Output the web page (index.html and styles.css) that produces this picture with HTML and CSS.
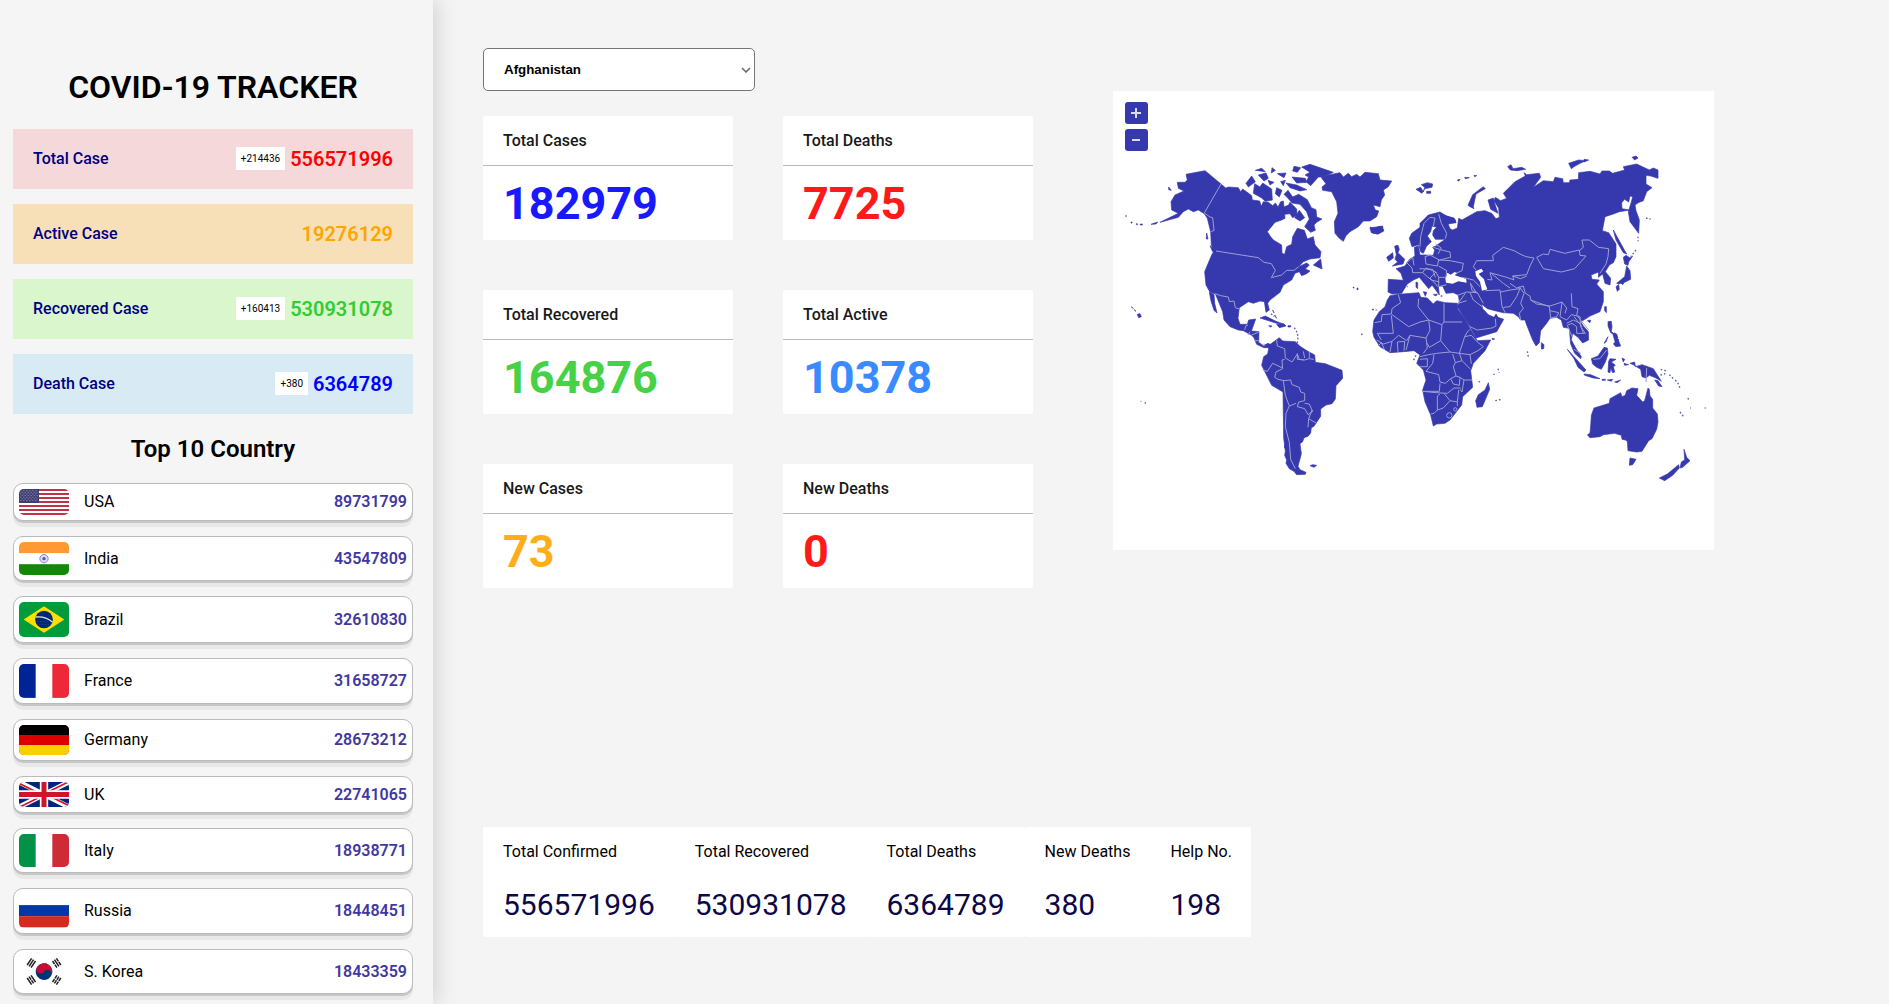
FILE: index.html
```html
<!DOCTYPE html>
<html lang="en">
<head>
<meta charset="utf-8">
<title>COVID-19 Tracker</title>
<link rel="stylesheet" href="styles.css">
</head>
<body>
<div class="app">
  <aside class="sidebar">
    <h1 class="title">COVID-19 TRACKER</h1>
    <div class="summary">
      <div class="case case-total"><span>Total Case</span><div class="case-value"><small>+214436</small><b>556571996</b></div></div>
      <div class="case case-active"><span>Active Case</span><div class="case-value"><b>19276129</b></div></div>
      <div class="case case-recovered"><span>Recovered Case</span><div class="case-value"><small>+160413</small><b>530931078</b></div></div>
      <div class="case case-death"><span>Death Case</span><div class="case-value"><small>+380</small><b>6364789</b></div></div>
    </div>
    <h2 class="subtitle">Top 10 Country</h2>
    <ul class="countries">
      <li>
        <svg class="flag flag-us" viewBox="0 0 150 79" preserveAspectRatio="none"><rect width="150" height="79" fill="#fff"/><path stroke="#bf3349" stroke-width="6.1" d="M0 3H150M0 15.200H150M0 27.300H150M0 39.500H150M0 51.600H150M0 63.800H150M0 76H150"/><rect width="60" height="42.500" fill="#3f3e72"/><path stroke="#a9a8c4" stroke-width="2.500" stroke-dasharray="3 6" d="M4 5H58M8 10H58M4 15H58M8 20H58M4 25H58M8 30H58M4 35H58"/></svg>
        <span>USA</span><b>89731799</b></li>
      <li>
        <svg class="flag" viewBox="0 0 150 100"><rect width="150" height="100" fill="#fff"/><rect width="150" height="33.300" fill="#f93"/><rect y="66.600" width="150" height="33.400" fill="#128807"/><circle cx="75" cy="50" r="12.500" fill="#dcdcf2" stroke="#8888c8" stroke-width="3"/><circle cx="75" cy="50" r="5" fill="#5757b2"/></svg>
        <span>India</span><b>43547809</b></li>
      <li>
        <svg class="flag flag-br" viewBox="0 0 150 105"><rect width="150" height="105" fill="#009c3b"/><path fill="#ffdf00" d="M14 52.500 75 13l61 39.500L75 92z"/><circle cx="75" cy="52.500" r="26.500" fill="#002776"/><path fill="none" stroke="#d5e6dd" stroke-width="4" d="M50 45q29-3 50 15"/><path stroke="#8094b8" stroke-width="2" stroke-dasharray="2 7" d="M56 59h34M62 67h28"/></svg>
        <span>Brazil</span><b>32610830</b></li>
      <li>
        <svg class="flag flag-fr" viewBox="0 0 150 100" preserveAspectRatio="none"><rect width="150" height="100" fill="#fff"/><rect width="50" height="100" fill="#002395"/><rect x="100" width="50" height="100" fill="#ed2939"/></svg>
        <span>France</span><b>31658727</b></li>
      <li>
        <svg class="flag flag-de" viewBox="0 0 150 90"><rect width="150" height="90" fill="#d00"/><rect width="150" height="30" fill="#000"/><rect y="60" width="150" height="30" fill="#ffce00"/></svg>
        <span>Germany</span><b>28673212</b></li>
      <li>
        <svg class="flag flag-uk" viewBox="0 0 60 30"><rect width="60" height="30" fill="#00247d"/><path stroke="#fff" stroke-width="6" d="M0 0 60 30M60 0 0 30"/><path stroke="#cf142b" stroke-width="2" d="M0 1.500 27 15M0 30.500 30 15.500M60 28.500 33 15M60-.5 30 14.500"/><path stroke="#fff" stroke-width="10" d="M30 0V30M0 15H60"/><path stroke="#cf142b" stroke-width="6" d="M30 0V30M0 15H60"/></svg>
        <span>UK</span><b>22741065</b></li>
      <li>
        <svg class="flag" viewBox="0 0 150 100"><rect width="150" height="100" fill="#fff"/><rect width="50" height="100" fill="#009246"/><rect x="100" width="50" height="100" fill="#ce2b37"/></svg>
        <span>Italy</span><b>18938771</b></li>
      <li>
        <svg class="flag" viewBox="0 0 150 100"><rect width="150" height="100" fill="#fff"/><rect y="33.300" width="150" height="33.400" fill="#0039a6"/><rect y="66.600" width="150" height="33.400" fill="#d52b1e"/></svg>
        <span>Russia</span><b>18448451</b></li>
      <li>
        <svg class="flag" viewBox="0 0 150 100"><rect width="150" height="100" fill="#fff"/><g transform="rotate(33.700 75 50)"><circle cx="75" cy="50" r="25" fill="#003478"/><path fill="#c60c30" d="M50 50a25 25 0 0 1 50 0 12.500 12.500 0 0 0-25 0 12.500 12.500 0 0 1-25 0z"/></g><g stroke="#222" stroke-width="4.500"><path transform="translate(37 24) rotate(33.700)" d="M-7-12V12M0-12V12M7-12V12"/><path transform="translate(113 24) rotate(-33.700)" d="M-7-12V-1M-7 1V12M0-12V12M7-12V-1M7 1V12"/><path transform="translate(37 75) rotate(-33.700)" d="M-7-12V12M0-12V-1M0 1V12M7-12V12"/><path transform="translate(113 75) rotate(33.700)" d="M-7-12V-1M-7 1V12M0-12V-1M0 1V12M7-12V-1M7 1V12"/></g></svg>
        <span>S. Korea</span><b>18433359</b></li>
    </ul>
  </aside>

  <main class="content">
    <section class="stats">
      <div class="picker">
        <select><option>Afghanistan</option></select>
        <svg viewBox="0 0 10 6"><path d="m1 1 4 4 4-4"/></svg>
      </div>
      <div class="cards">
        <article class="card"><h3>Total Cases</h3><p class="c-blue">182979</p></article>
        <article class="card"><h3>Total Deaths</h3><p class="c-red">7725</p></article>
        <article class="card"><h3>Total Recovered</h3><p class="c-green">164876</p></article>
        <article class="card"><h3>Total Active</h3><p class="c-sky">10378</p></article>
        <article class="card"><h3>New Cases</h3><p class="c-orange">73</p></article>
        <article class="card"><h3>New Deaths</h3><p class="c-red">0</p></article>
      </div>
      <div class="totals">
        <div><span>Total Confirmed</span><strong>556571996</strong></div>
        <div><span>Total Recovered</span><strong>530931078</strong></div>
        <div><span>Total Deaths</span><strong>6364789</strong></div>
        <div><span>New Deaths</span><strong>380</strong></div>
        <div><span>Help No.</span><strong>198</strong></div>
      </div>
    </section>

    <section class="map">
      <svg class="world" viewBox="0 0 1803 1377">
        <!-- North America and Greenland -->
        <g transform="translate(-9 -18)">
          <path class="land" d="M228 268 285 257 333 297 347 309 356 306 385 308 392 320 398 312 412 322 425 332 427 345 449 348 454 364 460 350 475 352 488 362 496 354 504 366 512 350 520 348 522 366 536 360 540 352 560 372 561 390 548 398 540 386 524 388 525 400 515 405 495 412 472 440 482 455 490 465 515 480 516 505 524 508 530 485 545 478 548 455 562 430 583 436 592 462 610 455 615 480 633 500 630 518 600 522 580 530 566 545 590 534 598 540 586 552 600 558 590 566 575 572 568 560 555 565 545 585 520 600 510 622 480 645 473 655 478 675 468 682 463 650 450 648 430 655 415 650 388 668 384 700 390 718 412 718 416 705 437 702 430 722 424 738 447 740 446 772 460 782 474 775 484 780 478 788 462 788 440 778 432 758 425 751 400 737 385 735 360 725 342 705 338 680 316 626 300 622 288 600 284 560 305 510 312 498 304 480 302 440 292 400 283 386 265 375 250 380 235 372 220 380 205 397 150 412 205 385 185 375 183 350 195 330 222 318 205 310 202 292 225 292 232 285z"/>
          <path class="land" d="M298 622 312 628 314 655 321 684 312 676 303 648zM655 270 690 263 700 276 715 265 725 275 740 268 750 276 765 262 805 266 810 285 845 288 835 305 820 315 824 330 814 345 810 365 790 360 796 375 806 378 800 395 780 408 760 408 745 425 720 440 708 452 700 469 688 460 675 445 673 410 684 385 680 350 665 320 638 316 636 306 648 296 634 278z"/>
          <path class="land" d="M434 296 450 306 458 294 485 312 487 345 466 349 454 338 430 325zM408 295 425 273 436 290 415 306zM575 246 600 238 670 262 640 276 625 276 602 302 588 290 596 276 585 270 600 262zM534 316 548 336 566 328 592 344 604 368 618 374 620 396 636 402 620 412 612 420 616 436 602 442 584 425 598 402 590 380 570 358 546 354 534 340 522 328zM436 256 455 250 466 260zM445 270 468 264 475 280 462 288zM486 248 496 256 484 264zM474 286 492 292 480 300zM502 266 528 264 522 278zM512 290 526 286 520 302zM552 244 572 248 562 262 548 258zM546 276 586 280 590 292 560 294zM528 294 560 300 590 314 570 318 540 308zM500 308 516 316 508 336 496 326zM568 376 584 398 570 408 554 398zM610 540 632 522 636 552zM568 548 584 540 582 566zM176 306 184 316 176 314zM780 426 792 430 812 424 822 436 805 447 788 444zM300 482 312 492 318 502 308 500zM290 444 294 462 289 462z"/>
          <path class="land" d="m450 699 16-6 30 15 26 10-22-3zM500 718l22-1 6 6-20 5zM476 722l10 1-4 3zM534 722h8v4h-8zM488 675l4 9zM494 690l6 10zM82 688l8-2 4 9-8 3zM64 666l6 4zM72 674l6 5zM123 418l20-7-5 6zM91 417h6v3h-6zM63 411h3v3h-3zM79 416h3v3h-3zM47 392h2v2h-2zM729 607h3v2h-3zM741 609h3v5h-3zM787 673h3v2h-3z"/>
          <path class="dots" d="M553 728l9 15 2 15-2 18M483 686l10 9M92 949h2M104 954h4M754 746l7 9"/>
          <path class="line" d="M333 297 283 384 300 396 308 398 312 436 304 440M318 498 445 518 462 532 484 536 496 556 484 578 515 570 530 556 552 556 566 545M316 626 332 632 355 636 358 650 372 648 376 668 388 672M404 734 408 722 414 720M420 740 414 750M424 750 446 742M432 765 446 768M462 776v8"/>
        </g>
        <!-- South America -->
        <g transform="translate(-9 597)">
          <path class="land" d="m478 165 30-22 10 10 38 2 14 14 22 14 22 12 2 22 30 4 50 20 2 24-20 22-2 40-10 14-18 4-16 12v22l-20 30-8 4-2 16-8 10-12 4-4 12-8 6 4 30-4 16-6 22 6 10 18 8-2 6-26 1-8-10-14-8-10-16 2-10-6-14 2-12-5-40-2-138-34-20-30-60 6-26 12-8z"/>
          <path class="land" d="m600 527 8-3 12 2-8 6zM524 466h5v8h-5z"/>
          <path class="line" d="m500 150 2 18 22 8 2 28 20 12 16-24 6 16 16 2 14-4 14 2M524 208l-8 2 2 26-20 10-4 16 10 6 18 4 20-2 4 14 22 8 4 14 12 4v22l-18 4-4 14 22 6 10 18 14-10-10-22-14-2M458 240l14 4 16-24 30 14M520 272l6 44 12 32-10 22-2 40 12 48 4 50 14 28M538 348l20-8M606 360l-10 26-2 26M596 386l24 14M584 204l-4-20M598 204V186M562 190v18l20 2"/>
        </g>
        <!-- Europe and Asia -->
        <g transform="translate(771 147)">
          <path class="land" d="M55 418 100 421 93 400 78 386 105 378 118 358 135 348 133 322 145 318 150 345 165 345 190 346 194 330 188 322 198 318 205 312 226 298 196 298 188 285 190 272 200 262 186 258 182 275 172 288 184 305 170 318 160 340 152 336 146 314 126 320 118 295 125 280 150 262 150 250 175 225 210 216 230 228 255 238 258 248 232 246 240 266 248 270 262 264 266 235 276 240 320 215 345 212 365 220 378 236 388 232 386 205 372 182 376 172 392 182 410 175 400 160 435 125 466 108 462 98 470 104 508 100 512 112 490 142 520 122 550 125 555 112 578 116 580 128 598 128 600 120 625 118 626 98 660 94 690 102 696 93 718 93 728 100 764 90 760 80 800 72 838 90 850 84 864 90 864 115 842 108 828 106 828 132 846 143 830 155 820 182 805 188 795 195 798 212 808 240 806 280 780 245 775 215 784 186 788 170 780 168 776 186 764 178 755 188 756 206 780 210 748 215 730 222 705 230 697 272 716 278 738 312 738 350 730 368 718 375 706 395 722 415 720 435 705 430 698 402 685 412 686 396 663 405 666 418 688 420 680 432 700 455 700 485 690 515 660 528 645 538 632 545 640 558 655 575 656 600 638 609 624 592 608 580 604 600 616 622 634 650 632 656 614 640 602 612 598 565 580 562 574 540 560 532 540 535 530 550 512 572 508 608 498 618 488 600 470 555 465 540 452 540 445 530 430 520 400 518 375 512 352 506 335 492 338 506 355 524 372 532 378 522 384 532 401 538 380 575 318 594 300 560 262 500 268 485 265 465 250 458 228 460 218 438 205 438 208 465 190 440 160 408 156 405 186 436 176 446 148 412 130 420 112 432 95 460 66 462 54 456z"/>
          <path class="sea" d="M232 398 242 404 254 396 262 400 254 406 288 416 290 428 265 424 248 431 228 428 226 414zM316 394 334 386 340 394 326 402 342 418 346 432 352 448 336 452 330 425 318 408z"/>
          <path class="land" d="m74 318 10-2 4 12-4 10 20 20-5 14-32 6 16-12-8-8 4-14zM50 352l18-14 2 16-14 10zM0 264l38-6 2 16-18 8-18-4zM300 200l-6-4 14-32 32-24 6 6-28 16-8 38 2 6zM354 180l16-6 4 16 10 30-22-12zM138 148l14-6 8 14 4-14-10-8 18-6 16 4-2 10-22 4-8 14zM170 154h12v6h-12zM222 226l30 8 6 14-24 4-14-10zM413 80l10-6 6 12 26-4 12 6-26 4-20-2zM596 70l30-10 22 2-18 8-18 10-8 6zM642 58l14 2-14 6zM786 52l12-4 6 6-10 6zM262 120l8-2-4 6zM284 112l14 1-12 3zM312 106l8 1-6 3zM730 270l32 58 8 14-10-4-22-38zM760 352l8-6 12 8 8-6-12 18-2 10-10-4zM770 378l10 14 2 26-16 8-20 6-6-2 24-20zM738 440l8-6 2 14-6 6zM754 430l8-2-4 6zM704 500h5v18l-5-6zM652 542l10-2-2 8zM714 545l10-1 2 16-2 14 12 12-14-8-8-20zM160 455l10 2-4 12zM138 426l5 2v18l-5-4zM190 464l12-2-4 6zM366 595l8 2-6 2z"/>
          <path class="land" d="m728 580 8 6 10 14-10 8z"/>
          <path class="dots" d="M804 290v14M798 330l-16 20M828 234l14 3M212 468h8M112 440h2"/>
          <path class="line" d="M150 320 152 290 162 250 180 232 195 234 190 258M206 222 214 250 230 280 226 296M190 322 215 330 240 336 242 352 208 360 180 345 165 350 168 372 202 378 206 360 240 362 280 370 276 392 258 400M206 378 230 392 228 412 206 412 198 396 168 384 158 398 128 398 126 384 110 368 128 352M128 352 132 376M196 312l18 12-10 18M206 412v28l24-6M198 396l-18 18 24 26M158 398l26 22 24 6M148 386l40 2 8 24M276 412 310 420 330 440M300 428 320 460M262 466 290 456 322 458 340 490M322 458 306 452 302 432M286 460 264 490 290 482M300 458 310 480 336 500M346 452 390 450 392 464 396 500 406 518M392 456 420 450 450 446 440 470 420 500 400 502M310 380 320 362 370 362 368 346 400 322 432 332 450 342 468 350 492 354 480 378 470 404 428 408 432 420 410 412 360 398 366 420 352 418M310 380 318 390M364 400 400 430 420 444M428 408 452 416 470 408M420 430 440 444 460 438 466 460 480 468 482 480 500 492 540 498 576 486 590 504 585 520M448 440 462 460 452 490 460 505 448 520 452 540M482 480l56 20 4 34 18-4 6-12-26-6M500 352 520 342 535 344 540 328 584 340 628 330 630 346 648 348 614 386 574 396 520 386zM628 332 640 322 636 300 658 300 686 322 716 326 714 350 708 372 690 400M576 486 570 530 590 540 604 524 630 530 632 560 646 580 620 580 620 560 606 550 592 556 606 590M612 530 636 560M300 560 322 570 366 564 378 558 376 536"/>
        </g>
        <!-- Africa and Oceania -->
        <g transform="translate(771 627)">
          <path class="land" d="M60-13 85-17 147-22 152-8 172-6 190 12 200 2 225 8 262 10 264 28 284 55 300 85 322 122 362 120 345 152 310 190 302 212 308 262 278 290 275 315 240 360 225 370 200 372 190 378 182 345 165 305 158 270 168 240 160 210 140 190 150 165 132 152 100 155 60 158 30 140 12 112 8 95 12 60 28 35 45 20 52 0z"/>
          <path class="land" d="m355 248 4 20-22 52-16 2-4-20 8-18 20-14zM514 128l8 6-1 12-7 1zM592 148l20 22 36 40-6 6-18-14-12-26zM642 222l20 2 28 12-20-2-26-8zM664 176l20-8 18-26 10 2 2 18-8 24-12 22-14-6-12-10zM716 184l4-8 18 2-14 8 12 10-6 4 4 16-6 2-6-14-2 14-6-2zM756 174l8 4-4 8zM762 190l14 4-12 2zM780 190l14-4 2 14 20-6 34 12 24 38-16-10-20-8-10 8-12-4-4-22-22-14zM734 246l18-6-10 8zM696 238h10v3h-10zM712 240l16-2-4 6zM702 130l12-20-6 16zM730 132l14-14 8 20-14 2zM732 98l8 4 4 12-8-4z"/>
          <path class="land" d="m854 240 10 2 12 18-10-2zM662 378l2-32 8-22 46-14 2-14 32-18 4 12 10-4 4-14 16-8 18 2-4 20 18 20 6-4 10-38 4 4 2 20 8 10v26l14 18 2 24-4 22-14 28-10 6-20 32-16 2-26-4-2-28-6-4-10-2-2-12-20-6-34 4-10 6-30 3-8-8 8-6zM780 474l18 4-10 16-10 2zM942 448l8 24 10 10-22 20-8 2 4-18 10-6zM926 494l2 10-20 22-24 16-16-8 24-12z"/>
          <path class="dots" d="M872 208l14 4-2 10-14 4M898 224l12 12M916 240l8 10 6 14M954 294l3 10M960 324h2M1004 324h3M930 336l10 13M472 154l4 22M384 206l4 12M370 223h4M326 244l8 6M376 302l18-4M138 166l-8 16M6 28l14 2"/>
          <path class="line" d="M85-15 92 8 66 26 64 42 36 44 34 64 14 68M64 46 70 100 22 100M66 44 116 80 150 66 176 60 144 20 146-4M176 60 216 74 222 66 222 10M222 66H276M176 60 180 90 168 114 120 106 110 122 86 106 66 124 60 156M168 114 172 144 160 160M120 106 108 150M82 126 84 156M82 126 104 124 102 152M66 124 40 132 20 120M22 100 34 120M24 138 34 128 44 150M216 74 212 122 178 142 172 130M212 122 240 156 200 160 176 164 150 170M192 164 188 190 168 214M150 178 172 176 172 200 150 200M240 156 268 160 284 110 292 96 300 88M268 160 300 164 324 152 340 140 322 126 304 106 284 110M300 164 304 192M268 160 276 182 256 188 248 162M276 182 302 208M256 188 250 200 258 228 242 236 250 252 268 256 270 232 258 228M168 214 206 224 210 246 226 250 242 236M158 274 208 274 210 250M158 274 198 278 232 280 252 264 272 264M270 232 282 240 306 240M282 240 276 276 270 268M210 282 202 288 202 330 192 340 182 342M202 330 220 324 240 302 262 306 266 270M240 302 222 280M262 306 262 318M830 204 828 246M670 178 690 176 710 150M604-20 606 20 624 26 620 46 640 70 656 90M590 70 610 60 630 70 640 100M612 148 632 160"/>
          <circle class="line" cx="238" cy="346" r="8"/><circle class="line" cx="256" cy="328" r="5"/>
        </g>
      </svg>
      <div class="zoom">
        <button aria-label="Zoom in"><svg viewBox="0 0 10 10"><path d="M5 0v10M0 5h10"/></svg></button>
        <button aria-label="Zoom out"><svg viewBox="0 0 10 10"><path d="M1 5h8"/></svg></button>
      </div>
    </section>
  </main>
</div>
</body>
</html>
```
FILE: styles.css
```css
* { box-sizing: border-box; margin: 0; padding: 0; }
body { font-family: Roboto, "Liberation Sans", sans-serif; background: #f4f4f4; color: #000; height: 1004px; overflow: hidden; }
.app { display: flex; height: 1004px; }

.sidebar { width: 433px; flex: none; height: 1004px; overflow: hidden; padding: 68px 20px 0 13px; background: #f5f5f5; box-shadow: 4px 0 20px rgba(0, 0, 0, .14); }
.title { font-size: 32px; font-weight: 600; line-height: 38px; text-align: center; }
.summary { display: flex; flex-direction: column; gap: 15px; margin-top: 23px; }
.case { height: 60px; padding: 0 20px 1px; display: flex; align-items: center; justify-content: space-between; font-size: 16px; font-weight: 500; color: navy; }
.case-value { display: flex; align-items: center; gap: 5px; }
.case-value small { background: #fff; color: #000; font-size: 10px; font-weight: 400; line-height: 13px; padding: 5px; }
.case-value b { font-size: 20px; font-weight: 600; }
.case-total { background: #f5d9da; }
.case-total b { color: red; }
.case-active { background: #f7e0b7; }
.case-active b { color: orange; }
.case-recovered { background: #daf6cc; }
.case-recovered b { color: limegreen; }
.case-death { background: #d8ebf5; }
.case-death b { color: blue; }

.subtitle { font-size: 24px; font-weight: 600; line-height: 28px; text-align: center; margin: 21px 0 19.7px; }
.countries { list-style: none; display: flex; flex-direction: column; gap: 15px; }
.countries li { flex: none; display: flex; align-items: center; padding: 5px; border: 1px solid #bbb; border-radius: 10px; background: #fff; font-size: 16px; box-shadow: 0 2px 0 rgba(0, 0, 0, .14), 0 6px 0 rgba(0, 0, 0, .05); }
.countries span { margin-left: 15px; }
.countries b { margin-left: auto; font-weight: 600; color: #4038a0; }
.flag { width: 50px; height: 33.33px; border-radius: 5px; display: block; }
.flag-us { height: 26px; }
.flag-br { height: 35px; }
.flag-fr { height: 33.9px; }
.flag-de { height: 30px; }
.flag-uk { height: 25px; }

.content { display: flex; padding: 48px 0 0 50px; gap: 80px; }
.stats { width: 550px; flex: none; }
.picker { position: relative; width: 272px; height: 43px; }
.picker select { appearance: none; display: block; width: 100%; height: 100%; padding: 0 20px; border: 1px solid #767676; border-radius: 5px; background: #fff; color: #000; font: 700 13.333px "Liberation Sans", Arial, sans-serif; }
.picker svg { position: absolute; right: 4px; top: 19px; width: 10px; height: 6px; fill: none; stroke: #666; stroke-width: 1.5; pointer-events: none; }
.cards { display: grid; grid-template-columns: 250px 250px; gap: 50px; margin-top: 25px; }
.card { height: 124px; background: #fff; border-radius: 2px; }
.card h3 { height: 50px; padding: 0 20px; border-bottom: 1px solid #bbb; font-size: 16px; font-weight: 500; line-height: 49px; color: #191919; }
.card p { padding: 1px 20px 0; font-size: 45px; font-weight: 700; line-height: 74px; height: 74px; }
.c-blue { color: #1919ff; }
.c-red { color: #ff1919; }
.c-green { color: #47d147; }
.c-sky { color: #3a8bff; }
.c-orange { color: #ffae19; }

.totals { display: flex; width: max-content; margin-top: 239px; }
.totals div { display: flex; flex-direction: column; gap: 26px; height: 110px; padding: 15px 20px 0; background: #fff; border-radius: 2px; }
.totals div:last-child { padding-right: 19px; }
.totals span { font-size: 16px; line-height: 19px; }
.totals strong { font-size: 30px; font-weight: 400; line-height: 35px; color: #0c0747; }

.map { position: relative; width: 601px; height: 459px; margin-top: 43px; background: #fff; }
.world { display: block; width: 601px; height: 459px; }
.land { fill: #3638ae; stroke: #3638ae; stroke-width: 2; stroke-linejoin: round; }
.sea { fill: #fff; }
.line { fill: none; stroke: #9d9fd0; stroke-width: 3; stroke-linejoin: round; }
.dots { fill: none; stroke: #5a5cbc; stroke-width: 4; stroke-dasharray: 5 6; }
.zoom { position: absolute; left: 12px; top: 11px; display: grid; gap: 5px; }
.zoom button { width: 22.5px; height: 22px; border: 0; border-radius: 3px; background: #3638ae; display: grid; place-items: center; }
.zoom svg { width: 10px; height: 10px; stroke: #dadaf2; stroke-width: 2; }
```
